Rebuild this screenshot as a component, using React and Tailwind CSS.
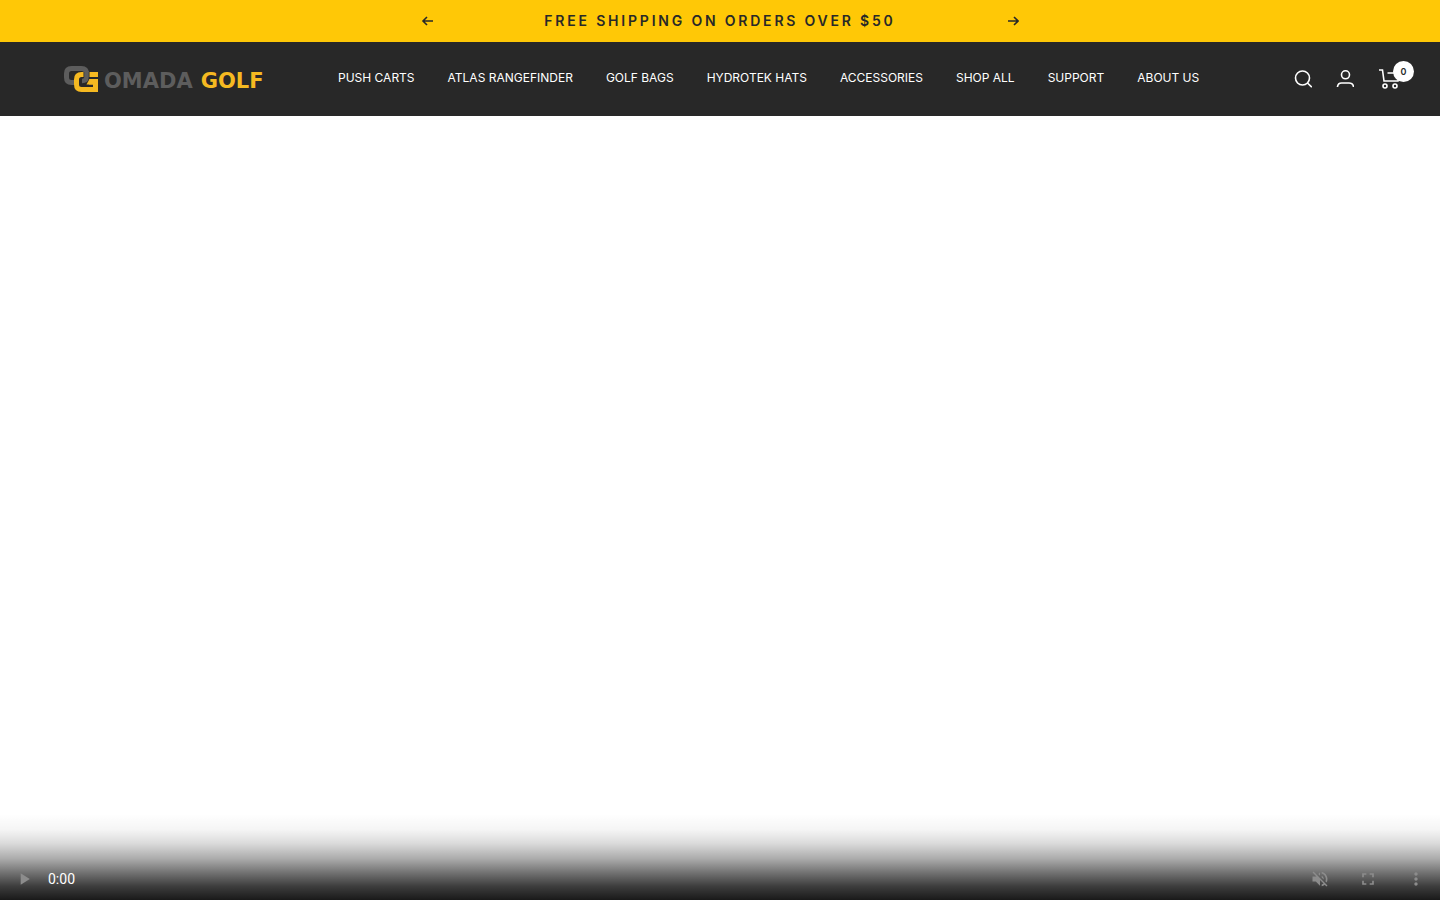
import React from "react";
import { MdPlayArrow, MdVolumeOff, MdFullscreen, MdMoreVert } from "react-icons/md";

const navLinks = [
  "Push Carts",
  "Atlas Rangefinder",
  "Golf Bags",
  "Hydrotek Hats",
  "Accessories",
  "Shop All",
  "Support",
  "About Us",
];

// Small arrow, flipped for the "next" button
const Arrow = ({ next }) => (
  <svg viewBox="0 0 12 10" className="w-3 h-[10px]" fill="none" stroke="currentColor" strokeWidth="1.6">
    {next ? <path d="M1 5h10M7 1l4 4-4 4" /> : <path d="M12 5h-10M6 1l-4 4 4 4" />}
  </svg>
);

const AnnouncementBar = () => (
  <div className="bg-[#ffc806] text-[#282828] h-[42px] flex items-center justify-center">
    <button aria-label="Previous" className="p-1">
      <Arrow />
    </button>
    <p className="w-full max-w-[566px] text-center text-sm leading-6 font-semibold tracking-[0.2em] uppercase">
      Free shipping on orders over $50
    </p>
    <button aria-label="Next" className="p-1">
      <Arrow next />
    </button>
  </div>
);

const Logo = () => (
  <a href="#" aria-label="Omada Golf" className="flex items-center gap-1.5 w-[242px] shrink-0">
    <svg viewBox="0 0 34 28" className="w-[34px] h-7 shrink-0" fill="none" strokeWidth="5">
      {/* O */}
      <path stroke="#5d5d5d" d="M10 17.5H7.5Q2.5 17.5 2.5 12.5V8.5Q2.5 3.5 7.5 3.5H17.5Q22.5 3.5 22.5 8.5" />
      {/* G */}
      <path stroke="#f5b921" d="M34 9.5H17.5Q12.5 9.5 12.5 14.5V19.5Q12.5 24.5 17.5 24.500H31.5V17H25" />
      {/* O crossing in front of the G */}
      <path stroke="#282828" strokeWidth="6" d="M22.500 7V12Q22.500 17 18 17" />
      <path stroke="#5d5d5d" strokeWidth="4.500" d="M22.500 6V12Q22.500 16 18 16" />
      <path fill="#f5b921" d="M25.500 14H34V19.500H22.500Z" />
      <path stroke="#282828" strokeWidth="2" d="M34 13H27" />
    </svg>
    <span className="flex items-center gap-2 pt-1 font-['DejaVu_Sans',sans-serif] text-[21px] leading-6 font-bold">
      <span className="text-[#5d5d5d]">OMADA</span>
      <span className="text-[#f5b921]">GOLF</span>
    </span>
  </a>
);

const Header = () => (
  <header className="bg-[#282828] text-white h-[74px] flex items-center pl-16 pr-10">
    <Logo />
    <nav className="flex-1 pl-8 pb-0.5">
      <ul className="flex gap-[33px] text-xs leading-4 uppercase whitespace-nowrap">
        {navLinks.map((link) => (
          <li key={link}>
            <a href="#">{link}</a>
          </li>
        ))}
      </ul>
    </nav>
    <div className="flex items-center gap-6">
      <button aria-label="Search">
        <svg viewBox="0 0 18 18" className="w-[18px] h-[18px]" fill="none" stroke="currentColor" strokeWidth="1.6">
          <circle cx="8.5" cy="8" r="7" />
          <path d="M13.5 13l4.300 4.300" />
        </svg>
      </button>
      <a href="#" aria-label="Account">
        <svg viewBox="0 0 18 18" className="w-[18px] h-[18px]" fill="none" stroke="currentColor" strokeWidth="1.6">
          <circle cx="9.5" cy="4.800" r="4" />
          <path d="M1.500 17v-.4Q2 13 5.500 13h7.500q4 0 4.500 3.600v.4" />
        </svg>
      </a>
      <a href="#" aria-label="Cart" className="relative">
        <svg viewBox="0 0 22 20" className="w-[22px] h-5" fill="none" stroke="currentColor" strokeWidth="1.6">
          <path d="M1 1h3.500l1.500 11h14l1-8H9.500" />
          <circle cx="7" cy="17" r="2" />
          <circle cx="17" cy="17" r="2" />
        </svg>
        <span className="absolute -top-2 left-[15px] size-[21px] rounded-full bg-white text-[#282828] text-[9px] leading-[21px] font-semibold text-center">
          0
        </span>
      </a>
    </div>
  </header>
);

const VideoControls = () => (
  <div className="h-[86px] flex items-end pb-[3px] bg-[linear-gradient(to_bottom,rgb(0_0_0/0)_0%,rgb(0_0_0/0.04)_18%,rgb(0_0_0/0.14)_34%,rgb(0_0_0/0.33)_52%,rgb(0_0_0/0.55)_68%,rgb(0_0_0/0.76)_84%,rgb(0_0_0/0.9)_100%)] text-[#8c8c8c]">
    <div className="flex-1 flex items-center h-9">
      <button disabled aria-label="Play" className="w-12 flex justify-center">
        <MdPlayArrow size={20} />
      </button>
      <span className="flex-1 text-white text-sm leading-5 font-[Roboto,sans-serif]">0:00</span>
      <button disabled aria-label="Unmute" className="w-12 flex justify-center">
        <MdVolumeOff size={20} />
      </button>
      <button disabled aria-label="Full screen" className="w-12 flex justify-center">
        <MdFullscreen size={20} />
      </button>
      <button disabled aria-label="More options" className="w-12 flex justify-center">
        <MdMoreVert size={20} />
      </button>
    </div>
  </div>
);

export default function App() {
  return (
    <div className="min-h-screen flex flex-col bg-white font-[Inter,sans-serif]">
      <AnnouncementBar />
      <Header />
      <main className="flex-1 flex flex-col justify-end">
        <VideoControls />
      </main>
    </div>
  );
}
